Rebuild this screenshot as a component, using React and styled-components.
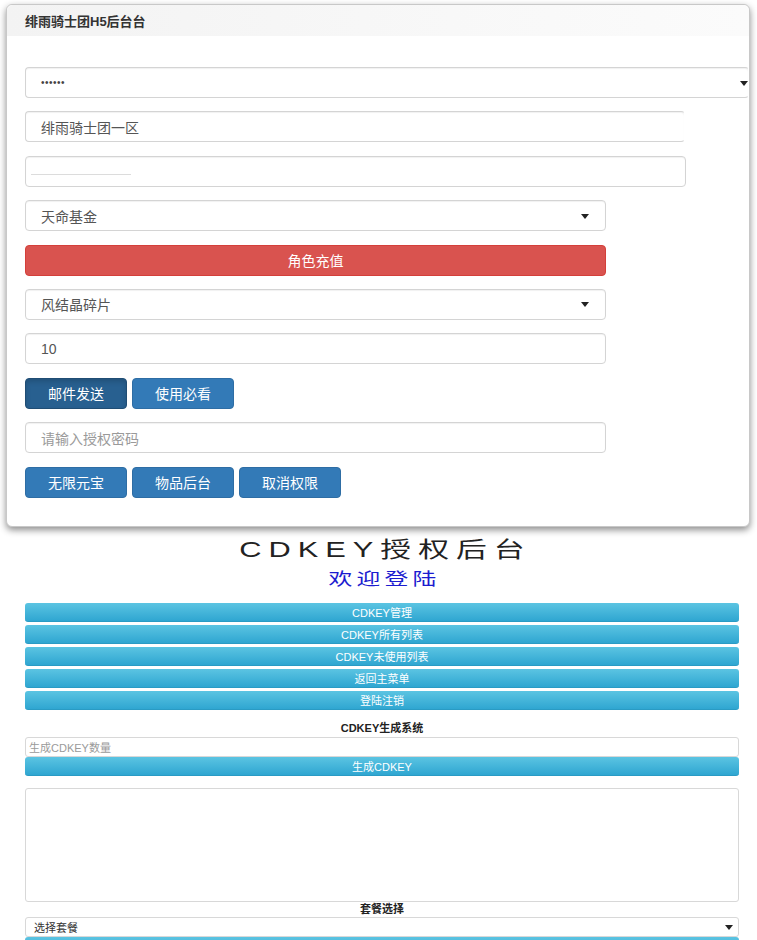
import React from "react";
import styled, { createGlobalStyle } from "styled-components";

const GlobalStyle = createGlobalStyle`
  body {
    margin: 0;
    background: #fff;
    font-family: "Liberation Sans", "Noto Sans CJK SC", sans-serif;
    color: #333;
  }
`;

const Page = styled.div`
  width: 757px;
  padding-top: 4px;
`;

/* top panel */
const Panel = styled.div`
  margin-left: 6px;
  width: 744px;
  border: 1px solid #c8c8c8;
  border-radius: 6px;
  box-shadow: 0 3px 7px rgba(0, 0, 0, 0.45);
  background: #fff;
  box-sizing: border-box;
`;

const PanelHead = styled.div`
  height: 31px;
  display: flex;
  align-items: center;
  padding-left: 18px;
  background: linear-gradient(90deg, #f3f3f3, #f8f8f8 60%, #fbfbfb);
  border-radius: 6px 6px 0 0;
  font-size: 13px;
  font-weight: bold;
  color: #333;
`;

const PanelBody = styled.div`
  display: flex;
  flex-direction: column;
  align-items: flex-start;
  gap: 13.4px;
  padding: 31px 18px 28px;
`;

const Field = styled.div`
  position: relative;
  width: ${(p) => p.$width || "581px"};
  height: 31px;
  box-sizing: border-box;
  border: 1px solid #d4d4d4;
  border-right-color: ${(p) => (p.$fade ? "transparent" : "#d4d4d4")};
  border-radius: 4px;
  box-shadow: inset 0 1px 1px rgba(0, 0, 0, 0.06);
  display: flex;
  align-items: center;
  padding: 0 15px;
  font-size: 14px;
  color: ${(p) => (p.$placeholder ? "#9a9a9a" : "#555")};
  background: #fff;
`;

const Dots = styled.span`
  font-size: 10px;
  letter-spacing: 0.5px;
  color: #444;
`;

const Smudge = styled.span`
  width: 100px;
  height: 1px;
  background: #dcdcdc;
  margin-left: -10px;
  margin-top: 6px;
`;

const Caret = styled.span`
  position: absolute;
  right: ${(p) => p.$right || "16px"};
  top: 50%;
  margin-top: -2px;
  width: 0;
  height: 0;
  border-left: 4px solid transparent;
  border-right: 4px solid transparent;
  border-top: 5px solid #222;
`;

const DangerButton = styled.div`
  width: 581px;
  height: 31px;
  border-radius: 4px;
  background: #d9534f;
  border: 1px solid #d43f3a;
  box-sizing: border-box;
  color: #fff;
  font-size: 14px;
  display: flex;
  align-items: center;
  justify-content: center;
`;

const ButtonRow = styled.div`
  display: flex;
  gap: 5px;
`;

const PrimaryButton = styled.div`
  width: 102px;
  height: 31px;
  box-sizing: border-box;
  border-radius: 4px;
  border: 1px solid ${(p) => (p.$active ? "#204d74" : "#2e6da4")};
  background: ${(p) => (p.$active ? "#286090" : "#337ab7")};
  box-shadow: ${(p) => (p.$active ? "inset 0 3px 5px rgba(0,0,0,0.15)" : "none")};
  color: #fff;
  font-size: 14px;
  display: flex;
  align-items: center;
  justify-content: center;
`;

/* cdkey section */
const Admin = styled.div`
  padding: 8px 18px 0 25px;
  display: flex;
  flex-direction: column;
`;

const Heading = styled.div`
  text-align: center;
  line-height: ${(p) => p.$line};
  margin-top: ${(p) => p.$top || "0"};
  color: ${(p) => p.$color || "#222"};
`;

const Stretched = styled.span`
  display: inline-block;
  font-size: ${(p) => p.$size};
  letter-spacing: ${(p) => p.$spacing};
  padding-left: ${(p) => p.$spacing};
  transform: scaleX(1.4);
`;

const Menu = styled.div`
  margin-top: 12px;
  display: flex;
  flex-direction: column;
  gap: 3px;
`;

const InfoButton = styled.div`
  height: 19px;
  border-radius: 3px;
  background: linear-gradient(#5bc4e2, #2fa6d1);
  border-bottom: 1px solid #2a9bc4;
  box-sizing: border-box;
  color: #fff;
  font-size: 11px;
  display: flex;
  align-items: center;
  justify-content: center;
`;

const SectionLabel = styled.div`
  text-align: center;
  font-size: 11px;
  font-weight: bold;
  line-height: 14px;
  margin-top: ${(p) => p.$top || "11px"};
  margin-bottom: ${(p) => p.$bottom || "2px"};
  color: #222;
`;

const SmallInput = styled.div`
  position: relative;
  height: 20px;
  box-sizing: border-box;
  border: 1px solid #d8d8d8;
  border-radius: 3px;
  display: flex;
  align-items: center;
  padding: 0 ${(p) => (p.$select ? "8px" : "3px")};
  font-size: 11px;
  color: ${(p) => (p.$select ? "#333" : "#9a9a9a")};
`;

const TextArea = styled.div`
  margin-top: 12px;
  height: 114px;
  border: 1px solid #d8d8d8;
  border-radius: 3px;
  box-sizing: border-box;
`;

const App = () => {
  return (
    <Page>
      <GlobalStyle />
      <Panel>
        <PanelHead>绯雨骑士团H5后台台</PanelHead>
        <PanelBody>
          <Field $width="724px" $fade>
            <Dots>••••••</Dots>
            <Caret $right="0px" />
          </Field>
          <Field $width="660px" $fade>绯雨骑士团一区</Field>
          <Field $width="661px">
            <Smudge />
          </Field>
          <Field>
            天命基金
            <Caret />
          </Field>
          <DangerButton>角色充值</DangerButton>
          <Field>
            风结晶碎片
            <Caret />
          </Field>
          <Field>10</Field>
          <ButtonRow>
            <PrimaryButton $active>邮件发送</PrimaryButton>
            <PrimaryButton>使用必看</PrimaryButton>
          </ButtonRow>
          <Field $placeholder>请输入授权密码</Field>
          <ButtonRow>
            <PrimaryButton>无限元宝</PrimaryButton>
            <PrimaryButton>物品后台</PrimaryButton>
            <PrimaryButton>取消权限</PrimaryButton>
          </ButtonRow>
        </PanelBody>
      </Panel>

      <Admin>
        <Heading $line="30px">
          <Stretched $size="22px" $spacing="5px">CDKEY授权后台</Stretched>
        </Heading>
        <Heading $line="22px" $top="2px" $color="#1c1ccf">
          <Stretched $size="17px" $spacing="3px">欢迎登陆</Stretched>
        </Heading>
        <Menu>
          <InfoButton>CDKEY管理</InfoButton>
          <InfoButton>CDKEY所有列表</InfoButton>
          <InfoButton>CDKEY未使用列表</InfoButton>
          <InfoButton>返回主菜单</InfoButton>
          <InfoButton>登陆注销</InfoButton>
        </Menu>
        <SectionLabel>CDKEY生成系统</SectionLabel>
        <SmallInput>生成CDKEY数量</SmallInput>
        <InfoButton>生成CDKEY</InfoButton>
        <TextArea />
        <SectionLabel $top="0px" $bottom="1px">套餐选择</SectionLabel>
        <SmallInput $select>
          选择套餐
          <Caret $right="5px" />
        </SmallInput>
        <InfoButton />
      </Admin>
    </Page>
  );
};

export default App;
